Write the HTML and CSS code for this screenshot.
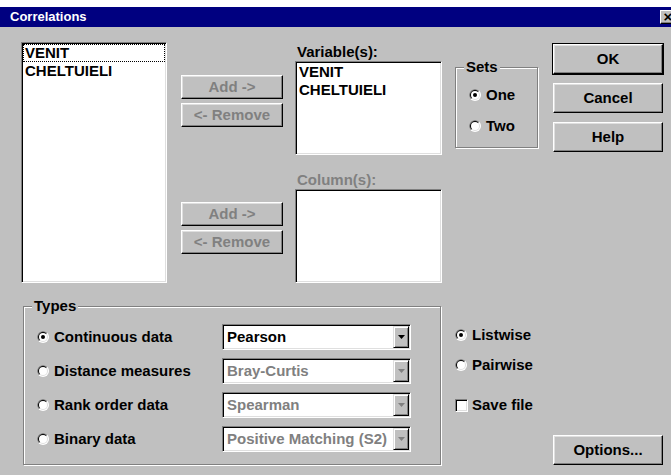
FILE: index.html
```html
<!DOCTYPE html>
<html lang="en">
<head>
<meta charset="utf-8">
<title>Correlations</title>
<link rel="stylesheet" href="styles.css">
</head>
<body>
<svg class="sprite" aria-hidden="true">
  <symbol id="radio-ring" viewBox="0 0 12 12">
    <circle cx="6" cy="6" r="6" fill="#fff"/>
    <path d="M1.757 10.243A6 6 0 0 1 10.243 1.757Z" fill="#808080"/>
    <circle cx="6" cy="6" r="5" fill="#dfdfdf"/>
    <path d="M2.464 9.536A5 5 0 0 1 9.536 2.464Z" fill="#000"/>
    <circle cx="6" cy="6" r="4" fill="#fff"/>
  </symbol>
  <symbol id="radio-on" viewBox="0 0 12 12">
    <use href="#radio-ring"/>
    <circle cx="6" cy="6" r="2" fill="#000"/>
  </symbol>
  <symbol id="drop" viewBox="0 0 7 4">
    <path d="M0 0H7L3.5 4Z"/>
  </symbol>
</svg>

<div class="window">
  <div class="titlebar">
    <span class="title">Correlations</span>
    <span class="close">×</span>
  </div>

  <div class="client">
    <div class="upper">
      <div class="listbox source">
        <div class="item focus">VENIT</div>
        <div class="item">CHELTUIELI</div>
      </div>

      <div class="movers">
        <div class="pair pair-vars">
          <button class="btn mover" disabled>Add -&gt;</button>
          <button class="btn mover" disabled>&lt;- Remove</button>
        </div>
        <div class="pair pair-cols">
          <button class="btn mover" disabled>Add -&gt;</button>
          <button class="btn mover" disabled>&lt;- Remove</button>
        </div>
      </div>

      <div class="targets">
        <div class="field-label">Variable(s):</div>
        <div class="listbox target">
          <div class="item">VENIT</div>
          <div class="item">CHELTUIELI</div>
        </div>
        <div class="field-label disabled">Column(s):</div>
        <div class="listbox target"></div>
      </div>

      <div class="group sets">
        <div class="group-label">Sets</div>
        <div class="sets-body">
          <label class="radio"><svg class="radio-icon"><use href="#radio-on"/></svg>One</label>
          <label class="radio"><svg class="radio-icon"><use href="#radio-ring"/></svg>Two</label>
        </div>
      </div>

      <div class="commands">
        <button class="btn cmd default">OK</button>
        <button class="btn cmd">Cancel</button>
        <button class="btn cmd">Help</button>
      </div>
    </div>

    <div class="lower">
      <div class="group types">
        <div class="group-label">Types</div>
        <div class="types-grid">
          <label class="radio"><svg class="radio-icon"><use href="#radio-on"/></svg>Continuous data</label>
          <div class="combo">
            <span class="combo-text">Pearson</span>
            <span class="combo-btn"><svg class="drop-icon"><use href="#drop"/></svg></span>
          </div>

          <label class="radio"><svg class="radio-icon"><use href="#radio-ring"/></svg>Distance measures</label>
          <div class="combo disabled">
            <span class="combo-text">Bray-Curtis</span>
            <span class="combo-btn"><svg class="drop-icon"><use href="#drop"/></svg></span>
          </div>

          <label class="radio"><svg class="radio-icon"><use href="#radio-ring"/></svg>Rank order data</label>
          <div class="combo disabled">
            <span class="combo-text">Spearman</span>
            <span class="combo-btn"><svg class="drop-icon"><use href="#drop"/></svg></span>
          </div>

          <label class="radio"><svg class="radio-icon"><use href="#radio-ring"/></svg>Binary data</label>
          <div class="combo disabled">
            <span class="combo-text">Positive Matching (S2)</span>
            <span class="combo-btn"><svg class="drop-icon"><use href="#drop"/></svg></span>
          </div>
        </div>
      </div>

      <div class="options">
        <label class="radio listwise"><svg class="radio-icon"><use href="#radio-on"/></svg>Listwise</label>
        <label class="radio pairwise"><svg class="radio-icon"><use href="#radio-ring"/></svg>Pairwise</label>
        <label class="check"><span class="check-box"></span>Save file</label>
        <button class="btn cmd options-btn">Options...</button>
      </div>
    </div>
  </div>
</div>
</body>
</html>
```

FILE: styles.css
```css
* {
  box-sizing: border-box;
}

body {
  margin: 0;
  background: #c0c0c0;
  color: #000;
  font: bold 15px/18px "Liberation Sans", Arial, sans-serif;
  overflow: hidden;
}

.sprite {
  display: block;
  width: 0;
  height: 0;
  overflow: hidden;
}

.window {
  width: 671px;
  height: 475px;
  border-top: 7px solid #fff;
}

/* caption */
.titlebar {
  height: 20px;
  background: #000080;
  display: flex;
  align-items: center;
  justify-content: space-between;
  padding-left: 10px;
  overflow: hidden;
}

.title {
  color: #fff;
  font-size: 13px;
}

.close {
  width: 16px;
  height: 14px;
  margin-right: -5px;
  background: #c0c0c0;
  border: 1px solid;
  border-color: #fff #000 #000 #fff;
  box-shadow: inset -1px -1px #808080;
  font-size: 15px;
  line-height: 11px;
  text-align: center;
}

.client {
  padding-left: 21px;
}

.upper {
  display: flex;
  align-items: flex-start;
  height: 256px;
}

/* sunken white boxes */
.listbox,
.combo,
.check-box {
  background: #fff;
  border: 1px solid;
  border-color: #808080 #fff #fff #808080;
  box-shadow: inset 1px 1px #000, inset -1px -1px #dfdfdf;
}

.listbox {
  padding: 1px;
}

.item {
  height: 18px;
  padding-left: 2px;
  white-space: nowrap;
}

.item.focus {
  outline: 1px dotted #000;
  outline-offset: -1px;
}

.source {
  width: 146px;
  height: 241px;
  margin-top: 15px;
}

/* raised push buttons */
.btn {
  font: inherit;
  color: #000;
  background: #c0c0c0;
  border: 1px solid;
  border-color: #fff #000 #000 #fff;
  box-shadow: inset -1px -1px #808080, inset 1px 1px #dfdfdf;
  padding: 0;
  margin: 0;
  display: flex;
  align-items: center;
  justify-content: center;
}

.btn:disabled {
  color: #808080;
}

.movers {
  width: 102px;
  margin-left: 14px;
}

.pair {
  display: flex;
  flex-direction: column;
  gap: 4px;
}

.pair-vars {
  margin-top: 48px;
}

.pair-cols {
  margin-top: 75px;
}

.mover {
  width: 102px;
  height: 24px;
}

.targets {
  width: 147px;
  margin-left: 12px;
}

.field-label {
  height: 18px;
  margin-top: 16px;
  padding-left: 2px;
}

.field-label.disabled {
  color: #808080;
}

.target {
  height: 94px;
}

/* etched group frames */
.group {
  border: 1px solid #808080;
  box-shadow: 1px 1px 0 #fff, inset 1px 1px 0 #fff;
}

.group-label {
  width: fit-content;
  height: 18px;
  margin: -10px 0 0 8px;
  padding: 0 2px;
  background: #c0c0c0;
}

.sets {
  width: 83px;
  margin-left: 13px;
  margin-top: 40px;
}

.sets-body {
  display: flex;
  flex-direction: column;
  gap: 13px;
  padding: 10px 0 12px 13px;
}

.radio,
.check {
  display: flex;
  align-items: center;
  height: 18px;
  white-space: nowrap;
}

.radio-icon {
  width: 12px;
  height: 12px;
  margin-right: 5px;
  flex: none;
}

.commands {
  width: 110px;
  margin-left: 15px;
  margin-top: 17px;
  display: flex;
  flex-direction: column;
  gap: 9px;
}

.cmd {
  width: 110px;
  height: 30px;
}

.cmd.default {
  outline: 1px solid #000;
}

/* lower half */
.lower {
  display: flex;
  align-items: flex-start;
  margin: 23px 0 0 2px;
}

.types {
  width: 418px;
  height: 159px;
}

.types-grid {
  display: grid;
  grid-template-columns: 185px 189px;
  grid-auto-rows: 26px;
  row-gap: 8px;
  align-items: center;
  padding: 9px 0 0 13px;
}

.combo {
  height: 26px;
  padding: 1px;
  display: flex;
}

.combo-text {
  flex: 1;
  min-width: 0;
  overflow: hidden;
  white-space: nowrap;
  padding-left: 3px;
  line-height: 22px;
}

.combo-btn {
  width: 16px;
  flex: none;
  background: #c0c0c0;
  border: 1px solid;
  border-color: #dfdfdf #000 #000 #dfdfdf;
  box-shadow: inset 1px 1px #fff, inset -1px -1px #808080;
  display: flex;
  align-items: center;
  justify-content: center;
}

.drop-icon {
  width: 7px;
  height: 4px;
  fill: #000;
}

.combo.disabled .combo-text {
  color: #808080;
}

.combo.disabled .drop-icon {
  fill: #808080;
}

.options {
  width: 208px;
  margin-left: 14px;
  display: flex;
  flex-direction: column;
}

.listwise {
  margin-top: 20px;
}

.pairwise {
  margin-top: 12px;
}

.check {
  margin-top: 22px;
}

.check-box {
  width: 13px;
  height: 13px;
  margin-right: 4px;
  flex: none;
}

.options-btn {
  align-self: flex-end;
  margin-top: 21px;
}
```
